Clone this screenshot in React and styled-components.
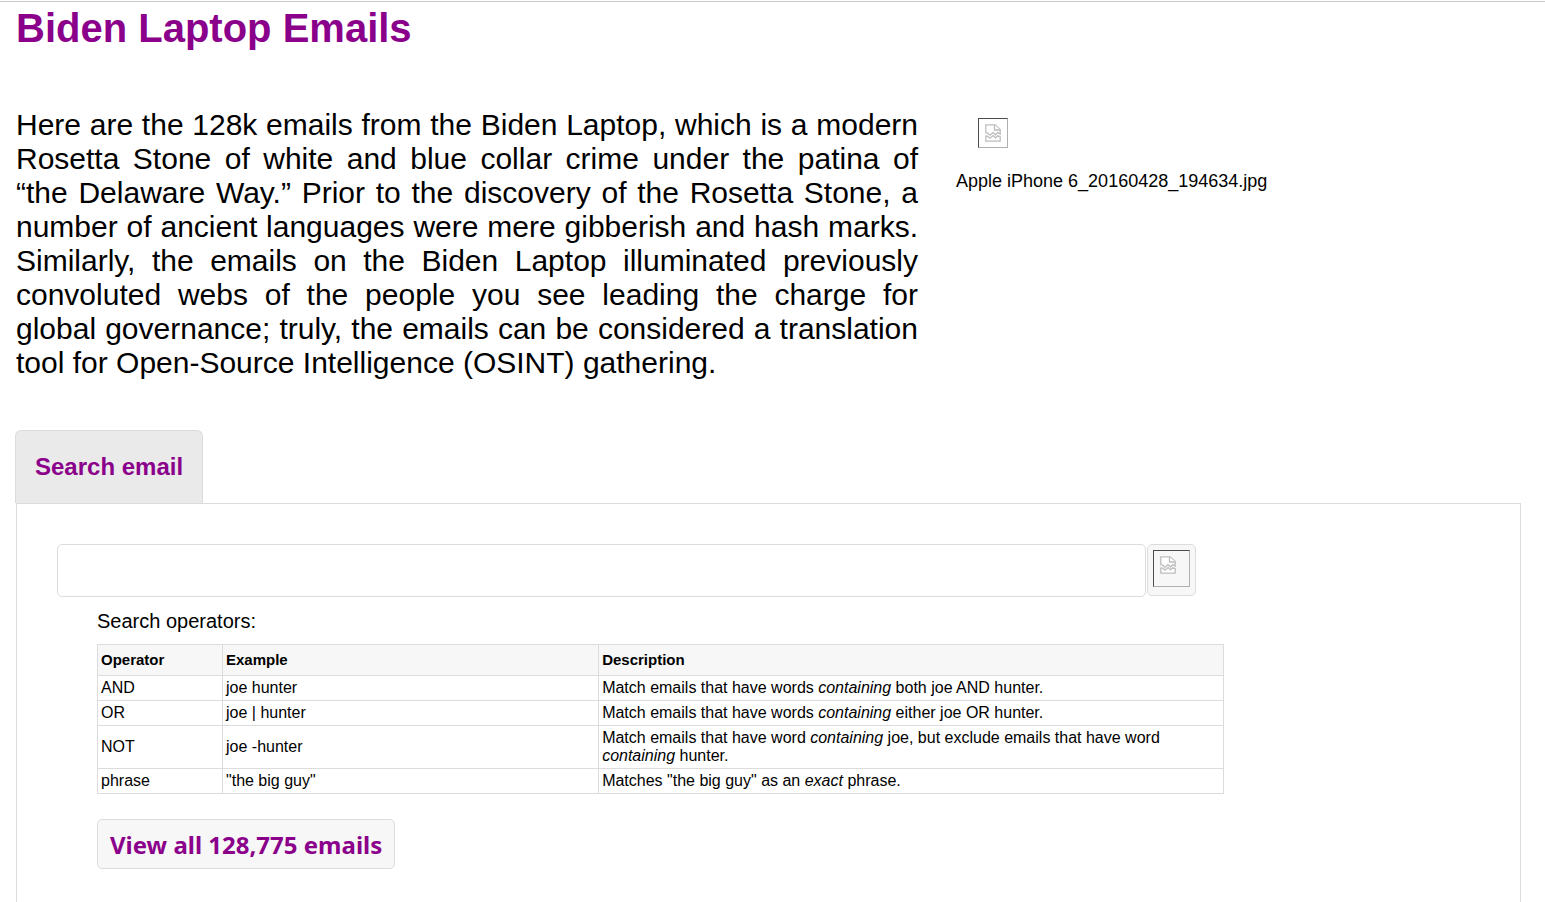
import React, { useState } from 'react';
import styled, { createGlobalStyle } from 'styled-components';

const GlobalStyle = createGlobalStyle`
    * {
        box-sizing: border-box;
    }

    body {
        margin: 0;
        background: #fff;
        color: #000;
        font-family: 'Liberation Sans', Arial, sans-serif;
    }
`;

const Page = styled.div`
    display: flex;
    flex-direction: column;
    min-height: 100vh;
    padding-top: 1px;
`;

const Main = styled.main`
    display: flex;
    flex-direction: column;
    flex: 1;
    padding: 3px 24px 0 16px;
    border-top: 1px solid #c8c8c8;
`;

const Title = styled.h1`
    margin: 0;
    color: #8b008b;
    font-size: 40px;
    line-height: 46px;
`;

const Intro = styled.section`
    display: flex;
    gap: 38px;
    margin-top: 57px;
`;

const IntroText = styled.p`
    width: calc(60% - 1px);
    margin: 0;
    font-size: 30px;
    line-height: 34px;
    text-align: justify;
`;

const Figure = styled.figure`
    margin: 0;
    padding-top: 10px;
`;

const Caption = styled.figcaption`
    margin-top: 22px;
    font-size: 18px;
    line-height: 22px;
`;

const ImageFrame = styled.span`
    display: block;
    width: ${(props) => props.$size}px;
    height: ${(props) => props.$size}px;
    padding: 5px 6px;
    border: 1px solid;
    border-color: #4c4c4c #b0b0b0 #b0b0b0 #4c4c4c;

    figure & {
        margin-left: 22px;
    }

    svg {
        display: block;
    }
`;

const Tabs = styled.div`
    display: flex;
    margin: 50px 0 0 -1px;
`;

const Tab = styled.button`
    padding: 22px 19px;
    border: 1px solid #dcdcdc;
    border-bottom: none;
    border-radius: 6px 6px 0 0;
    background: #eaeaea;
    color: #8b008b;
    font-family: inherit;
    font-size: 24px;
    font-weight: bold;
    line-height: 28px;
    cursor: pointer;
`;

const Panel = styled.section`
    flex: 1;
    padding: 40px 40px 32px;
    border: 1px solid #dcdcdc;
    border-bottom: none;
`;

const SearchForm = styled.form`
    display: flex;
    align-items: flex-start;
    gap: 1px;
    width: calc(80% + 1px);
`;

const SearchInput = styled.input`
    flex: 1;
    min-width: 0;
    height: 53px;
    padding: 0 12px;
    border: 1px solid #dcdcdc;
    border-radius: 5px;
    font-family: inherit;
    font-size: 24px;
`;

const SearchButton = styled.button`
    padding: 5px 5px 8px;
    border: 1px solid #dcdcdc;
    border-radius: 5px;
    background: #f7f7f7;
    cursor: pointer;
`;

const Help = styled.div`
    margin: 12px 0 0 40px;
`;

const HelpTitle = styled.p`
    margin: 0;
    font-size: 20px;
    line-height: 24px;
`;

const OperatorTable = styled.table`
    width: 81.5%;
    margin-top: 11px;
    border-collapse: collapse;
    table-layout: fixed;
    font-size: 16px;
    line-height: 18px;

    th, td {
        padding: 3px;
        border: 1px solid #dcdcdc;
        text-align: left;
    }

    th {
        padding: 6px 3px;
        background: #f7f7f7;
        font-size: 15px;
    }

    th:first-child {
        width: 11.1%;
    }

    th:nth-child(2) {
        width: 33.4%;
    }
`;

const ViewAllButton = styled.button`
    margin-top: 25px;
    padding: 9px 12px 7px;
    border: 1px solid #dcdcdc;
    border-radius: 5px;
    background: #f7f7f7;
    color: #8b008b;
    font-family: 'Noto Sans', sans-serif;
    font-size: 24px;
    font-weight: bold;
    line-height: 32px;
    cursor: pointer;
`;

const operators = [
    {
        name: 'AND',
        example: 'joe hunter',
        description: <>Match emails that have words <em>containing</em> both joe AND hunter.</>
    },
    {
        name: 'OR',
        example: 'joe | hunter',
        description: <>Match emails that have words <em>containing</em> either joe OR hunter.</>
    },
    {
        name: 'NOT',
        example: 'joe -hunter',
        description: <>Match emails that have word <em>containing</em> joe, but exclude emails that have word <em>containing</em> hunter.</>
    },
    {
        name: 'phrase',
        example: '"the big guy"',
        description: <>Matches "the big guy" as an <em>exact</em> phrase.</>
    }
];

function MissingImage({ size }) {
    return (
        <ImageFrame $size={size}>
            <svg width="16" height="18" viewBox="0 0 16 18" fill="#fff" stroke="#bdbdbd" strokeWidth="1.3" aria-hidden="true">
                <path d="M.8 8.8V.8H10.2L15.2 5.6V10L13 8.6 10.5 10.8 8 8.6 5 11.2 2.8 9.2Z" />
                <path d="M9.5 .8V6H15.2" />
                <path d="M.8 17.2V12.2H2.6L5 14.2 8 11.6 10.5 13.8 12.8 11.8 15.2 12.8V17.2Z" />
            </svg>
        </ImageFrame>
    );
}

function App() {
    const [query, setQuery] = useState('');

    const handleSubmit = (e) => {
        e.preventDefault();
    };

    return (
        <Page>
            <GlobalStyle />
            <Main>
                <Title>Biden Laptop Emails</Title>
                <Intro>
                    <IntroText>
                        Here are the 128k emails from the Biden Laptop, which is a modern Rosetta Stone of
                        white and blue collar crime under the patina of “the Delaware Way.” Prior to the
                        discovery of the Rosetta Stone, a number of ancient languages were mere gibberish and
                        hash marks. Similarly, the emails on the Biden Laptop illuminated previously convoluted
                        webs of the people you see leading the charge for global governance; truly, the emails
                        can be considered a translation tool for Open-Source Intelligence (OSINT) gathering.
                    </IntroText>
                    <Figure>
                        <MissingImage size={30} />
                        <Caption>Apple iPhone 6_20160428_194634.jpg</Caption>
                    </Figure>
                </Intro>
                <Tabs role="tablist">
                    <Tab type="button" role="tab" aria-selected="true">Search email</Tab>
                </Tabs>
                <Panel>
                    <SearchForm onSubmit={handleSubmit}>
                        <SearchInput
                            type="text"
                            name="query"
                            aria-label="Search email"
                            value={query}
                            onChange={(e) => setQuery(e.target.value)}
                        />
                        <SearchButton type="submit" aria-label="Search">
                            <MissingImage size={37} />
                        </SearchButton>
                    </SearchForm>
                    <Help>
                        <HelpTitle>Search operators:</HelpTitle>
                        <OperatorTable>
                            <thead>
                                <tr>
                                    <th>Operator</th>
                                    <th>Example</th>
                                    <th>Description</th>
                                </tr>
                            </thead>
                            <tbody>
                                {operators.map((operator) => (
                                    <tr key={operator.name}>
                                        <td>{operator.name}</td>
                                        <td>{operator.example}</td>
                                        <td>{operator.description}</td>
                                    </tr>
                                ))}
                            </tbody>
                        </OperatorTable>
                        <ViewAllButton type="button">View all 128,775 emails</ViewAllButton>
                    </Help>
                </Panel>
            </Main>
        </Page>
    );
}

export default App;
